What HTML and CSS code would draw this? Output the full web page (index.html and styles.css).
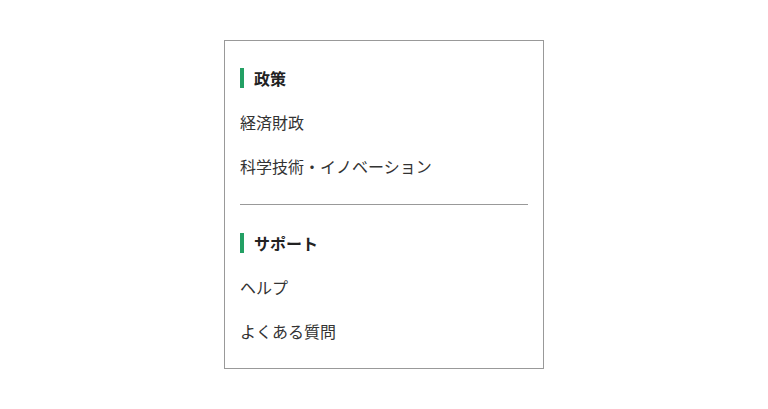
FILE: index.html
```html
<!DOCTYPE html>
<html lang="ja">
<head>
    <meta charset="UTF-8">
    <meta name="viewport" content="width=device-width, initial-scale=1.0">
    <title>メニュー</title>
    <link rel="stylesheet" href="styles.css">
</head>
<body>
    <nav class="menu-box">
        <div class="menu-group">
            <h2 class="menu-title">政策</h2>
            <ul class="menu-list">
                <li><a href="#">経済財政</a></li>
                <li><a href="#">科学技術・イノベーション</a></li>
            </ul>
        </div>
        <hr class="menu-divider">
        <div class="menu-group">
            <h2 class="menu-title">サポート</h2>
            <ul class="menu-list">
                <li><a href="#">ヘルプ</a></li>
                <li><a href="#">よくある質問</a></li>
            </ul>
        </div>
    </nav>
</body>
</html>
```

FILE: styles.css
```css
body {
    font-family: "Noto Sans CJK JP", "Noto Sans", sans-serif;
    background-color: #fff;
    color: #333;
    margin: 0;
    padding: 40px 0;
}
.menu-box {
    width: 320px;
    box-sizing: border-box;
    margin: 0 auto;
    padding: 15px;
    border: 1px solid #999;
}
.menu-title {
    display: flex;
    align-items: center;
    height: 44px;
    margin: 0;
    font-size: 16px;
    font-weight: bold;
    color: #222;
}
.menu-title::before {
    content: "";
    width: 4px;
    height: 20px;
    margin-right: 10px;
    background: #23a064;
}
.menu-list {
    list-style: none;
    margin: 0;
    padding: 0;
}
.menu-list a {
    display: flex;
    align-items: center;
    height: 44px;
    font-size: 16px;
    color: #333;
    text-decoration: none;
}
.menu-divider {
    margin: 16px 0;
    border: none;
    border-top: 1px solid #999;
}
```
